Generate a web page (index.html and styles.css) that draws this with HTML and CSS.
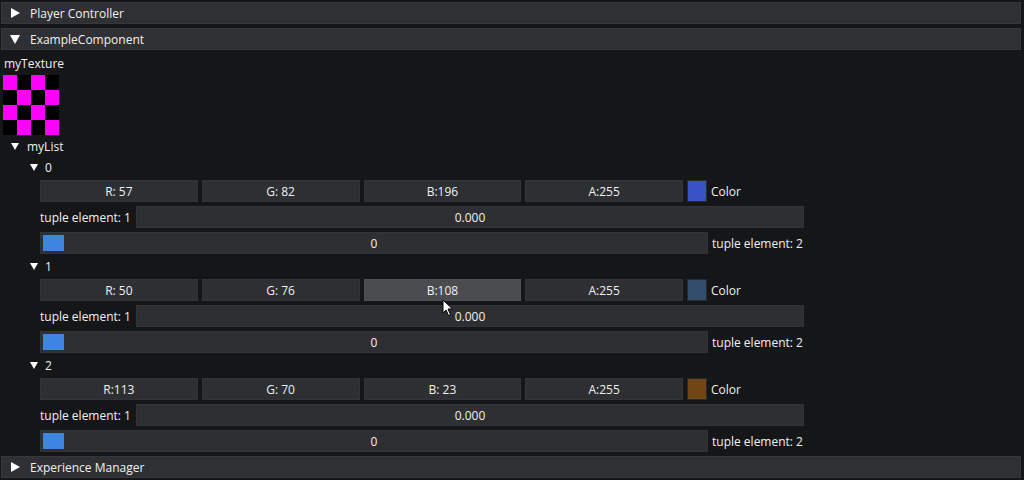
FILE: index.html
```html
<!DOCTYPE html>
<html>
<head>
<meta charset="utf-8">
<link rel="stylesheet" href="styles.css">
</head>
<body>
<div class="panel">
  <div class="header"><svg class="tri" viewBox="0 0 10 10"><polygon points="1,0 10,5 1,10" fill="#fff"/></svg><span>Player Controller</span></div>
  <div class="header"><svg class="tri" viewBox="0 0 10 10"><polygon points="0,1 10,1 5,10" fill="#fff"/></svg><span>ExampleComponent</span></div>
  <div class="component">
    <div class="label">myTexture</div>
    <div class="checker">
      <i class="m"></i><i></i><i class="m"></i><i></i>
      <i></i><i class="m"></i><i></i><i class="m"></i>
      <i class="m"></i><i></i><i class="m"></i><i></i>
      <i></i><i class="m"></i><i></i><i class="m"></i>
    </div>
    <div class="node list-node"><svg class="tri-s" viewBox="0 0 8 7"><polygon points="0,0 8,0 4,7" fill="#fff"/></svg><span>myList</span></div>
    <div class="list">
      <div class="item">
        <div class="node item-node"><svg class="tri-s" viewBox="0 0 8 7"><polygon points="0,0 8,0 4,7" fill="#fff"/></svg><span>0</span></div>
        <div class="row">
          <div class="cells">
            <div class="frame cell">R: 57</div>
            <div class="frame cell">G: 82</div>
            <div class="frame cell">B:196</div>
            <div class="frame cell">A:255</div>
          </div>
          <div class="swatch" style="background: rgb(57,82,196)"></div>
          <span class="side">Color</span>
        </div>
        <div class="row">
          <span class="lbl">tuple element: 1</span>
          <div class="frame input">0.000</div>
        </div>
        <div class="row">
          <div class="frame slider"><div class="grab"></div><span>0</span></div>
          <span class="side">tuple element: 2</span>
        </div>
      </div>
      <div class="item">
        <div class="node item-node"><svg class="tri-s" viewBox="0 0 8 7"><polygon points="0,0 8,0 4,7" fill="#fff"/></svg><span>1</span></div>
        <div class="row">
          <div class="cells">
            <div class="frame cell">R: 50</div>
            <div class="frame cell">G: 76</div>
            <div class="frame cell hover">B:108</div>
            <div class="frame cell">A:255</div>
          </div>
          <div class="swatch" style="background: rgb(50,76,108)"></div>
          <span class="side">Color</span>
        </div>
        <div class="row">
          <span class="lbl">tuple element: 1</span>
          <div class="frame input">0.000</div>
        </div>
        <div class="row">
          <div class="frame slider"><div class="grab"></div><span>0</span></div>
          <span class="side">tuple element: 2</span>
        </div>
      </div>
      <div class="item">
        <div class="node item-node"><svg class="tri-s" viewBox="0 0 8 7"><polygon points="0,0 8,0 4,7" fill="#fff"/></svg><span>2</span></div>
        <div class="row">
          <div class="cells">
            <div class="frame cell">R:113</div>
            <div class="frame cell">G: 70</div>
            <div class="frame cell">B: 23</div>
            <div class="frame cell">A:255</div>
          </div>
          <div class="swatch" style="background: rgb(113,70,23)"></div>
          <span class="side">Color</span>
        </div>
        <div class="row">
          <span class="lbl">tuple element: 1</span>
          <div class="frame input">0.000</div>
        </div>
        <div class="row">
          <div class="frame slider"><div class="grab"></div><span>0</span></div>
          <span class="side">tuple element: 2</span>
        </div>
      </div>
    </div>
  </div>
  <div class="header last"><svg class="tri" viewBox="0 0 10 10"><polygon points="1,0 10,5 1,10" fill="#fff"/></svg><span>Experience Manager</span></div>
</div>
<svg class="cursor" viewBox="0 0 12 18" width="12" height="18"><path d="M1 1 L1 14 L4 11 L6.5 16.5 L8.5 15.5 L6 10 L10.5 10 Z" fill="#fff" stroke="#000" stroke-width="1" stroke-linejoin="round"/></svg>
</body>
</html>
```

FILE: styles.css
```css
html, body {
  margin: 0;
  padding: 0;
  background: #151618;
  width: 1024px;
  height: 480px;
  overflow: hidden;
}
body {
  font-family: "Open Sans", "Noto Sans", sans-serif;
  font-size: 12px;
  color: #f0f0f0;
  position: relative;
}
.panel {
  padding: 2px 3px 0 1px;
  display: flex;
  flex-direction: column;
}
.header {
  height: 22px;
  box-sizing: border-box;
  background: #2f3033;
  border: 1px solid #37383b;
  display: flex;
  align-items: center;
  padding-left: 8px;
  gap: 10px;
  margin-bottom: 4px;
}
.header.last {
  margin-top: 4px;
  margin-bottom: 0;
}
.tri {
  width: 10px;
  height: 10px;
  flex: none;
}
.component {
  display: flex;
  flex-direction: column;
}
.label {
  height: 18px;
  line-height: 18px;
  padding-left: 3px;
  margin-top: 1px;
}
.checker {
  margin-top: 2px;
  margin-left: 2px;
  display: grid;
  grid-template-columns: repeat(4, 14px);
  grid-template-rows: repeat(4, 15px);
  width: 56px;
}
.checker i {
  background: #000;
}
.checker i.m {
  background: #ff00ff;
}
.node {
  height: 17px;
  display: flex;
  align-items: center;
}
.list-node {
  margin-top: 3px;
  padding-left: 10px;
  gap: 8px;
}
.tri-s {
  width: 8px;
  height: 7px;
  flex: none;
}
.list {
  display: flex;
  flex-direction: column;
}
.item {
  display: flex;
  flex-direction: column;
  margin-top: 4px;
}
.item-node {
  padding-left: 29px;
  gap: 7px;
}
.row {
  margin-top: 4px;
  margin-left: 39px;
  height: 22px;
  display: flex;
  align-items: center;
}
.frame {
  height: 22px;
  box-sizing: border-box;
  background: #2e2f32;
  border: 1px solid #333437;
  display: flex;
  align-items: center;
  justify-content: center;
}
.cells {
  width: 643px;
  display: flex;
  gap: 4px;
  flex: none;
}
.cell {
  flex: 1;
}
.cell.hover {
  background: #4a4b4e;
  border-color: #505154;
}
.swatch {
  width: 20px;
  height: 22px;
  box-sizing: border-box;
  border: 1px solid #2a2b2e;
  flex: none;
  margin-left: 4px;
  margin-right: 4px;
}
.side {
  white-space: nowrap;
}
.lbl {
  width: 96px;
  flex: none;
  white-space: nowrap;
}
.input {
  width: 668px;
}
.slider {
  width: 668px;
  position: relative;
  margin-right: 4px;
}
.grab {
  position: absolute;
  left: 2px;
  top: 2px;
  width: 21px;
  height: 16px;
  background: #3d85e0;
}
.cursor {
  position: absolute;
  left: 442px;
  top: 299px;
}
```
